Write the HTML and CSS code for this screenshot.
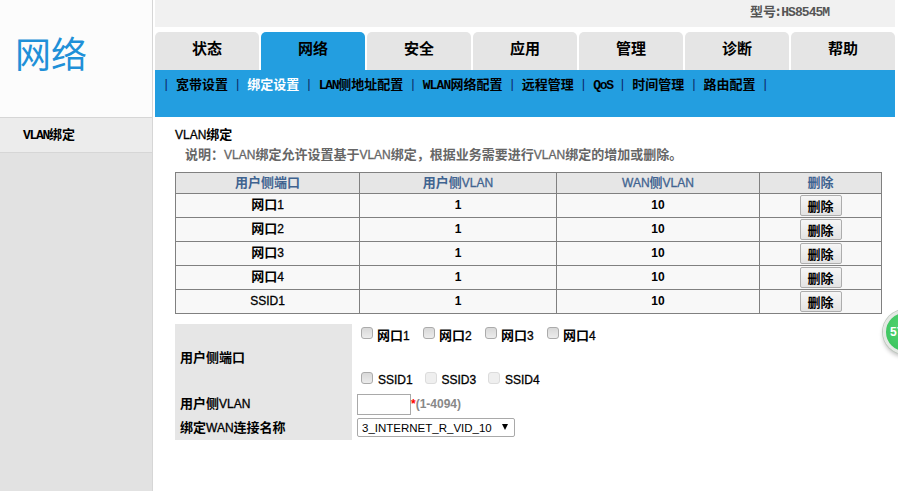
FILE: index.html
```html
<!DOCTYPE html>
<html lang="zh-CN">
<head>
<meta charset="utf-8">
<title>VLAN绑定</title>
<link rel="stylesheet" href="styles.css">
</head>
<body>
<div class="page">
  <aside class="side">
    <div class="logo">网络</div>
    <div class="side-item"><span class="m">VLAN</span>绑定</div>
  </aside>
  <main class="main">
    <div class="topbar"><span class="model">型号:<span class="m model-m">HS8545M</span></span></div>
    <nav class="tabs">
      <a class="tab">状态</a><a class="tab active">网络</a><a class="tab">安全</a><a class="tab">应用</a><a class="tab">管理</a><a class="tab">诊断</a><a class="tab">帮助</a>
    </nav>
    <div class="subnav">
      <span class="sep">|</span><a>宽带设置</a><span class="sep">|</span><a class="on">绑定设置</a><span class="sep">|</span><a><span class="m">LAN</span>侧地址配置</a><span class="sep">|</span><a><span class="m wlan">WLAN</span>网络配置</a><span class="sep">|</span><a>远程管理</a><span class="sep">|</span><a><span class="m">QoS</span></a><span class="sep">|</span><a>时间管理</a><span class="sep">|</span><a>路由配置</a><span class="sep">|</span>
    </div>
    <section class="content">
      <h1 class="title"><span class="l">VLAN</span>绑定</h1>
      <p class="desc">说明：<span class="l">VLAN</span>绑定允许设置基于<span class="l">VLAN</span>绑定，根据业务需要进行<span class="l">VLAN</span>绑定的增加或删除。</p>
      <table class="list">
        <colgroup><col class="c1"><col class="c2"><col class="c3"><col class="c4"></colgroup>
        <thead><tr><th>用户侧端口</th><th>用户侧<span class="l">VLAN</span></th><th><span class="l">WAN</span>侧<span class="l">VLAN</span></th><th>删除</th></tr></thead>
        <tbody>
          <tr><td>网口<span class="l">1</span></td><td><span class="n">1</span></td><td><span class="n">10</span></td><td><button class="del">删除</button></td></tr>
          <tr><td>网口<span class="l">2</span></td><td><span class="n">1</span></td><td><span class="n">10</span></td><td><button class="del">删除</button></td></tr>
          <tr><td>网口<span class="l">3</span></td><td><span class="n">1</span></td><td><span class="n">10</span></td><td><button class="del">删除</button></td></tr>
          <tr><td>网口<span class="l">4</span></td><td><span class="n">1</span></td><td><span class="n">10</span></td><td><button class="del">删除</button></td></tr>
          <tr><td><span class="l">SSID1</span></td><td><span class="n">1</span></td><td><span class="n">10</span></td><td><button class="del">删除</button></td></tr>
        </tbody>
      </table>
      <div class="form">
        <div class="lab"><span>用户侧端口</span></div>
        <div class="val-port">
          <div class="checks first">
            <label class="chk"><input type="checkbox"><span>网口<span class="l">1</span></span></label>
            <label class="chk"><input type="checkbox"><span>网口<span class="l">2</span></span></label>
            <label class="chk"><input type="checkbox"><span>网口<span class="l">3</span></span></label>
            <label class="chk"><input type="checkbox"><span>网口<span class="l">4</span></span></label>
          </div>
          <div class="checks second">
            <label class="chk"><input type="checkbox"><span class="l">SSID1</span></label>
            <label class="chk"><input type="checkbox" disabled><span class="l">SSID3</span></label>
            <label class="chk"><input type="checkbox" disabled><span class="l">SSID4</span></label>
          </div>
        </div>
        <div class="lab"><span>用户侧<span class="l">VLAN</span></span></div>
        <div class="val-vlan"><input class="vlan" type="text"><span class="star">*</span><span class="hint">(1-4094)</span></div>
        <div class="lab"><span>绑定<span class="l">WAN</span>连接名称</span></div>
        <div class="val-wan"><span class="wan-box"><select class="wan"><option>3_INTERNET_R_VID_10</option></select></span></div>
      </div>
    </section>
  </main>
  <div class="bubble">57</div>
</div>
</body>
</html>
```
FILE: styles.css
```css
* { box-sizing: border-box; }
html, body { margin: 0; height: 100%; overflow: hidden; background: #fff; }
body { font-family: "Noto Sans CJK SC", "Liberation Sans", sans-serif; font-size: 13px; color: #000; }
.page { position: relative; display: flex; width: 898px; height: 491px; overflow: hidden; }
.l { font-family: "Liberation Sans", sans-serif; font-size: 12px; line-height: 1; font-weight: normal; -webkit-text-stroke: .3px currentColor; }
.n { font-family: "Liberation Sans", sans-serif; font-size: 12px; line-height: 1; font-weight: bold; }
.m { font-family: "Liberation Mono", monospace; font-size: 13px; line-height: 1; letter-spacing: -1.3px; font-weight: bold; }
.m.wlan { letter-spacing: -.85px; }
.side { width: 153px; margin-right: 2px; flex: none; height: 491px; background: #e2e2e2; border-right: 1px solid #d6d6d6; }
.logo { height: 118px; background: #fcfcfc; border-bottom: 1px solid #d6d6d6; color: #1f90d8; font-size: 36px; line-height: 105px; padding-left: 15px; }
.side-item { height: 35px; background: #ececec; border-bottom: 1px solid #d6d6d6; font-weight: bold; line-height: 32px; padding-left: 23px; }
.main { width: 740px; flex: none; }
.topbar { height: 27px; background: #f1f1f1; padding-left: 595px; line-height: 22px; color: #555; font-weight: bold; }
.model-m { letter-spacing: -.95px; margin-left: 1px; }
.tabs { display: flex; gap: 2px; margin-top: 5px; height: 38px; }
.tab { width: 104px; height: 38px; background: #e5e5e5; border-radius: 5px 5px 0 0; text-align: center; font-size: 15px; font-weight: bold; line-height: 31px; }
.tab.active { background: #239ee0; }
.subnav { height: 47px; background: #239ee0; padding: 4px 0 0 1.5px; display: flex; font-weight: bold; line-height: 20px; }
.subnav .sep { width: 19.4px; text-align: center; color: #0c2a6b; font-family: "Liberation Sans", sans-serif; font-weight: normal; }
.subnav a.on { color: #fff; }
.content { padding: 9px 0 0 20px; }
.title { margin: 0; font-size: 13px; font-weight: bold; line-height: 16px; }
.desc { margin: 4px 0 0 10px; font-size: 13px; font-weight: bold; color: #666; line-height: 16px; }
.list { border-collapse: collapse; width: 706px; margin-top: 10px; table-layout: fixed; }
.c1 { width: 184px; } .c2 { width: 197px; } .c3 { width: 203px; } .c4 { width: 122px; }
.list th, .list td { border: 1px solid #808080; text-align: center; padding: 0 0 4px; font-size: 13px; font-weight: bold; line-height: 16px; }
.list th { background: #e6e6e6; color: #3f6390; height: 21px; padding-bottom: 2px; }
.list td { background: #f8f8f8; height: 24px; }
.list td:last-child { padding: 0; }
.del { width: 42px; height: 21px; padding: 0; background: linear-gradient(#f6f6f6, #e3e3e3); border: 1px solid #adadad; border-radius: 2px; font: bold 13px/18px "Noto Sans CJK SC", sans-serif; color: #000; display: block; margin: 0 auto; }
.form { display: grid; grid-template-columns: 177px 530px; grid-template-rows: 68px 24px 24px; margin-top: 10px; font-weight: bold; }
.lab { background: #e6e6e6; padding: 0 0 2px 5px; display: flex; align-items: center; line-height: 18px; }
.val-port { padding: 1px 0 0 9px; }
.checks { display: flex; height: 20px; }
.second { margin-top: 25px; }
.second .l { line-height: 20px; }
.chk { display: flex; line-height: 20px; width: 62px; }
.second .chk { width: 63.5px; }
.chk input { appearance: none; -webkit-appearance: none; flex: none; margin: 2px 4px 0 0; width: 12px; height: 12px; border: 1px solid #ababab; border-radius: 3px; background: linear-gradient(#d8d8d8, #ececec); }
.second .chk input { margin: 2px 5px 0 0; }
.chk input:disabled { border-color: #dcdcdc; background: #efefef; }
.val-vlan { display: flex; align-items: center; padding-left: 5px; font: bold 12px "Liberation Sans", sans-serif; }
.vlan { width: 54px; height: 21px; border: 1px solid #a9a9a9; padding: 0; background: #fff; }
.star { color: #f00; }
.hint { color: #888; }
.val-wan { padding: 2px 0 0 5px; }
.wan-box { position: relative; display: block; width: 158px; height: 19px; }
.wan-box::after { content: ""; position: absolute; left: 145px; top: 6px; border: 3.5px solid transparent; border-top: 6px solid #000; border-bottom: 0; }
.wan { appearance: none; -webkit-appearance: none; display: block; width: 158px; height: 19px; padding: 0 0 0 4px; font: 11.5px "Liberation Sans", sans-serif; color: #000; background: #fff; border: 1px solid #a9a9a9; border-radius: 2px; }
.bubble { position: absolute; left: 883px; top: 310px; width: 44px; height: 44px; border-radius: 50%; background: radial-gradient(circle at 50% 40%, #55d675, #35bf58); border: 3px solid #e4e8e4; box-shadow: 0 0 0 1px #bfc9bf, 0 3px 4px rgba(0,0,0,.25); color: #fff; font: bold 12px/38px "Liberation Sans", sans-serif; padding-left: 4px; }
```
